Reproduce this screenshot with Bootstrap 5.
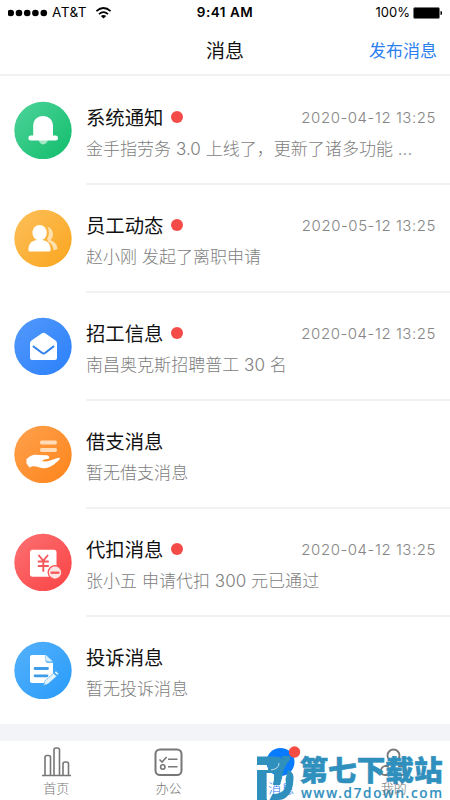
<!DOCTYPE html>
<html lang="zh-CN">
<head>
<meta charset="utf-8">
<meta name="viewport" content="width=device-width, initial-scale=1">
<title>消息</title>
<link rel="stylesheet" href="https://cdn.jsdelivr.net/npm/bootstrap@5.3.0/dist/css/bootstrap.min.css">
<style>
body{width:450px;height:800px;overflow:hidden;background:#fff;color:#111;font-family:Inter,"Noto Sans CJK SC",sans-serif}
.status{height:25px;font-size:13px;line-height:25px;color:#000}
.status-side{width:150px}
.carrier{font-size:13.5px;padding-left:2px;letter-spacing:.5px}
.clock{font-size:13.5px;letter-spacing:.5px}
.topbar{height:51px;border-bottom:2px solid #f1f1f2}
.topbar-title{font-size:19px;line-height:54px;color:#111}
.topbar-link{font-size:17px;line-height:53px;color:#2a80ee;padding-right:13px}
.topbar-side{width:150px}
.msg{height:108px;padding-left:14px}
.msg-icon{width:58px;height:58px;margin-top:25px}
.msg-body{margin-left:14px;padding-top:27px;border-bottom:2px solid #f2f2f2;position:relative;height:109px}
.msg:last-child .msg-body{border-bottom:0;height:108px}
.msg-head{height:31px;padding-right:14px}
.msg-title{font-size:19.35px;line-height:31px}
.dot{width:12px;height:12px;background:#f44b48;margin-left:8px;margin-bottom:3px;border-radius:50%}
.msg-date{font-size:15px;line-height:29px;padding-bottom:3px;color:#858585;font-weight:300;letter-spacing:.55px}
.msg-text{font-size:17px;line-height:31px;color:#7d7d7d;font-weight:300;letter-spacing:.03px}
.gap-band{height:17px;background:#f2f4f8}
.tabs{height:59px}
.tab{width:112.5px;padding-top:4px;color:#777}
.tab svg{width:32px;height:34px}
.tab-label{font-size:13px;line-height:18px;font-weight:300}
.tab-on{color:#1677f2}
.tab-over{z-index:2}
.brand{left:255px;top:744px;width:195px;height:56px}
</style>
</head>
<body class="d-flex flex-column position-relative">
<div class="status d-flex justify-content-between px-2 flex-shrink-0">
  <div class="status-side d-flex align-items-center">
    <svg width="42" height="10" viewBox="0 0 42 10"><g fill="#000"><circle cx="2.7" cy="5" r="3.3"/><circle cx="11" cy="5" r="3.3"/><circle cx="19.2" cy="5" r="3.3"/><circle cx="27.4" cy="5" r="3.3"/><circle cx="35.8" cy="5" r="3.3"/></g></svg>
    <span class="carrier">AT&amp;T</span>
    <svg class="ms-2" width="17" height="12" viewBox="0 0 17 12"><g fill="none" stroke="#000" stroke-width="1.8"><path d="M1.4 4.2Q8.5-2.2 15.6 4.2M4 7.1q4.5-3.9 9 0"/></g><path d="M5.8 8.9q2.7-2 5.4 0L8.5 11.5z"/></svg>
  </div>
  <span class="clock fw-semibold">9:41 AM</span>
  <div class="status-side d-flex align-items-center justify-content-end">
    <span class="text-nowrap">100%</span>
    <svg width="32" height="12" viewBox="-3 0 32 12"><rect x=".5" y=".5" width="26" height="11" rx="1.500" fill="#000" stroke="#777"/><path d="M27.500 4q2 .3 2 2t-2 2z"/></svg>
  </div>
</div>
<header class="topbar d-flex justify-content-between flex-shrink-0">
  <span class="topbar-side"></span>
  <span class="topbar-title">消息</span>
  <span class="topbar-side topbar-link text-end">发布消息</span>
</header>
<main class="flex-shrink-0">
  <div class="msg d-flex">
    <svg class="msg-icon flex-shrink-0" viewBox="0 0 58 58"><defs><linearGradient id="g1" x1="0" y1="0" x2="1" y2="1"><stop stop-color="#4fd39b"/><stop offset="1" stop-color="#10bd6b"/></linearGradient></defs><circle cx="29" cy="29.5" r="28.7" fill="url(#g1)"/><circle cx="29.2" cy="39" r="4.4" fill="#a5e8c7"/><path d="M29 15c-6 0-9.800 4.200-9.800 10v9.500h-2.300a2.500 2.500 0 0 0 0 5h24.600a2.500 2.500 0 0 0 0-5h-2.500V25c0-5.800-4-10-10-10z" fill="#fff"/></svg>
    <div class="msg-body flex-grow-1"><div class="msg-head d-flex align-items-center"><span class="msg-title">系统通知</span><i class="dot"></i><span class="msg-date ms-auto">2020-04-12 13:25</span></div><div class="msg-text">金手指劳务 3.0 上线了，更新了诸多功能 ...</div></div>
  </div>
  <div class="msg d-flex">
    <svg class="msg-icon flex-shrink-0" viewBox="0 0 58 58"><defs><linearGradient id="g2" x1="0" y1="0" x2="1" y2="1"><stop stop-color="#fcc05a"/><stop offset="1" stop-color="#fba51e"/></linearGradient></defs><circle cx="29" cy="29.500" r="28.700" fill="url(#g2)"/><path d="M33.500 17.500q5.500 2.500 5.500 8 0 3.500-2.500 5.500 6.500 2.500 7 9l-4 1.500q0-6-5.500-9l-1-2.500q3.500-5 .5-12.500z" fill="#fee1ad"/><g fill="#fff"><ellipse cx="25.600" cy="23.800" rx="7.200" ry="7.800"/><path d="M14.500 41.500v-2.500q1.200-7.500 8.500-8h5q7.500.5 8.500 8v2.500q0 1-1 1h-20q-1 0-1-1z"/></g></svg>
    <div class="msg-body flex-grow-1"><div class="msg-head d-flex align-items-center"><span class="msg-title">员工动态</span><i class="dot"></i><span class="msg-date ms-auto">2020-05-12 13:25</span></div><div class="msg-text">赵小刚 发起了离职申请</div></div>
  </div>
  <div class="msg d-flex">
    <svg class="msg-icon flex-shrink-0" viewBox="0 0 58 58"><defs><linearGradient id="g3" x1="0" y1="0" x2="1" y2="1"><stop stop-color="#5299fb"/><stop offset="1" stop-color="#2b80fb"/></linearGradient></defs><circle cx="29" cy="29.500" r="28.700" fill="url(#g3)"/><path d="M17.500 23.500L28 16.300q1.600-1 3.200 0l10.300 7.200q1.500 1 1.500 3V41q0 2-2 2H18q-2 0-2-2V26.500q0-2 1.500-3z" fill="#fff"/><path d="M19.500 29.500l8.700 6.500q1.400 1 2.800 0l8.500-6.500" fill="none" stroke="#2f7fee" stroke-width="2" stroke-linecap="round"/></svg>
    <div class="msg-body flex-grow-1"><div class="msg-head d-flex align-items-center"><span class="msg-title">招工信息</span><i class="dot"></i><span class="msg-date ms-auto">2020-04-12 13:25</span></div><div class="msg-text">南昌奥克斯招聘普工 30 名</div></div>
  </div>
  <div class="msg d-flex">
    <svg class="msg-icon flex-shrink-0" viewBox="0 0 58 58"><defs><linearGradient id="g4" x1="0" y1="0" x2="1" y2="1"><stop stop-color="#ffa14f"/><stop offset="1" stop-color="#fd8419"/></linearGradient></defs><circle cx="29" cy="29.500" r="28.700" fill="url(#g4)"/><path d="M27.500 15.500h14q1.500 0 1.500 2t-1.500 2h-14q-1.500 0-1.500-2t1.500-2zm0 7.500h14q1.500 0 1.500 2t-1.500 2h-14q-1.500 0-1.500-2t1.500-2z" fill="#ffdcb7"/><path d="M12.500 34q4-3.800 7.500-4.200 2.500-.3 5 .2l8 .2q2.500.3 2.300 2.200-.3 1.600-2.300 1.700-3 .2-5.300 1.900 4 1 7.800-.2l7-2.500q2.800-1 3.300-.2.500 1-1 2.200-5 5-9.800 7-5 1.600-9.500.2-4.500-1.800-7-1.200l-3 1.200-3-4z" fill="#fff"/></svg>
    <div class="msg-body flex-grow-1"><div class="msg-head d-flex align-items-center"><span class="msg-title">借支消息</span></div><div class="msg-text">暂无借支消息</div></div>
  </div>
  <div class="msg d-flex">
    <svg class="msg-icon flex-shrink-0" viewBox="0 0 58 58"><defs><linearGradient id="g5" x1="0" y1="0" x2="1" y2="1"><stop stop-color="#fc7172"/><stop offset="1" stop-color="#fa4244"/></linearGradient></defs><circle cx="29" cy="29.500" r="28.700" fill="url(#g5)"/><rect x="16" y="16.800" width="26.500" height="27" rx="2.500" fill="#fff"/><path d="M24.500 22l4.800 5.800L34 22M29.300 28v10.800M23.800 28.500h11M23.800 33h11" stroke="#f5595a" stroke-width="1.900" fill="none"/><circle cx="41" cy="39.500" r="6.800" fill="#ffe4e3" stroke="#fa5354" stroke-width="1.300"/><path d="M36.500 39.700h9" stroke="#f5595a" stroke-width="2.300"/></svg>
    <div class="msg-body flex-grow-1"><div class="msg-head d-flex align-items-center"><span class="msg-title">代扣消息</span><i class="dot"></i><span class="msg-date ms-auto">2020-04-12 13:25</span></div><div class="msg-text">张小五 申请代扣 300 元已通过</div></div>
  </div>
  <div class="msg d-flex">
    <svg class="msg-icon flex-shrink-0" viewBox="0 0 58 58"><defs><linearGradient id="g6" x1="0" y1="0" x2="1" y2="1"><stop stop-color="#55b1fb"/><stop offset="1" stop-color="#289bfa"/></linearGradient></defs><circle cx="29" cy="29.500" r="28.700" fill="url(#g6)"/><path d="M18 14h13.500v5.500q0 2.300 2.300 2.300H39V33L30 42H18q-2 0-2-2V16q0-2 2-2z" fill="#fff"/><path d="M32 14l6.800 6.500h-5q-1.800 0-1.800-1.800z" fill="#d9efff"/><path d="M21 27.500h12.500M21 34.800h12" stroke="#3e9ce9" stroke-width="2.800" stroke-linecap="round"/><path d="M29.500 44.500l1.700-4.900 8.300-7.300 3.200 3-8.500 7.500zm11-13.200l1.500-1.200 2.600 2.700-1.300 1.500z" fill="#e4f4ff" stroke="#48a9f8" stroke-width=".6"/></svg>
    <div class="msg-body flex-grow-1"><div class="msg-head d-flex align-items-center"><span class="msg-title">投诉消息</span></div><div class="msg-text">暂无投诉消息</div></div>
  </div>
</main>
<div class="gap-band flex-shrink-0"></div>
<nav class="tabs d-flex flex-shrink-0">
  <div class="tab d-flex flex-column align-items-center"><svg viewBox="0 0 32 34"><path d="M2 30.500h29M5 30V12.500q0-2 2-2h1.500q2 0 2 2V30M14 30V5q0-2 2-2h1.500q2 0 2 2v25M23 30V19q0-2 2-2h1.500q2 0 2 2v11" fill="none" stroke="#777" stroke-width="1.600"/></svg><span class="tab-label">首页</span></div>
  <div class="tab d-flex flex-column align-items-center"><svg viewBox="0 0 32 34"><g fill="none" stroke="#777" stroke-width="1.600"><rect x="2.500" y="4.500" width="26" height="25.500" rx="4.500" stroke-width="2"/><path d="M6.500 14.500l2.600 2.500 4.500-5M15 14.200h9.500M15 21.800h9.500"/><circle cx="9.800" cy="22" r="2.200"/></g></svg><span class="tab-label">办公</span></div>
  <div class="tab tab-on d-flex flex-column align-items-center"><svg viewBox="0 0 32 34"><circle cx="15.500" cy="17" r="14" fill="#087bff"/></svg><span class="tab-label">消息</span></div>
  <div class="tab d-flex flex-column align-items-center"><svg viewBox="0 0 32 34"><g fill="none" stroke="#777" stroke-width="1.800"><circle cx="15.500" cy="10.500" r="6"/><path d="M11 21H7q-4 1-4 5t4 4h17q4 0 4-4t-4-5h-4"/></g></svg><span class="tab-label tab-over position-relative">我的</span></div>
</nav>
<svg class="brand position-absolute" viewBox="255 744 195 56">
  <path d="M257 756.500h18q9 0 9 6.500 0 3-3 6l-4 7-3 8v-11h-7v27h-10v-30h11v-5h-11z" fill="#2f8fbd"/>
  <path d="M282 756h8v4q-7 7-8 18l-2 7h-7q1-9 5-14 5-5 5-10z" fill="#2f8fbd"/>
  <path d="M288 770q6 2 5.500 9-.5 13-7 18-3 3-8 3h-9l3-6q9 0 12-5 2-4 1-10z" fill="#2f8fbd"/>
  <path d="M271 770q8-1 8-7M267 773v26" fill="none" stroke="#fff" stroke-width=".7"/>
  <circle cx="294.500" cy="752" r="5.700" fill="#f64c43"/>
  <text x="299.500" y="780.500" textLength="143" lengthAdjust="spacingAndGlyphs" font-family="Noto Sans CJK SC" font-weight="900" font-size="28.500" fill="#2f8fbd" stroke="#2f8fbd" stroke-width=".5">第七下载站</text>
  <text x="301" y="797.500" textLength="141" font-family="Noto Sans" font-weight="500" font-size="13.500" fill="#2f8fbd" stroke="#2f8fbd" stroke-width=".2">www.d7down.com</text>
</svg>
<script src="https://cdn.jsdelivr.net/npm/bootstrap@5.3.0/dist/js/bootstrap.bundle.min.js"></script>
</body>
</html>
